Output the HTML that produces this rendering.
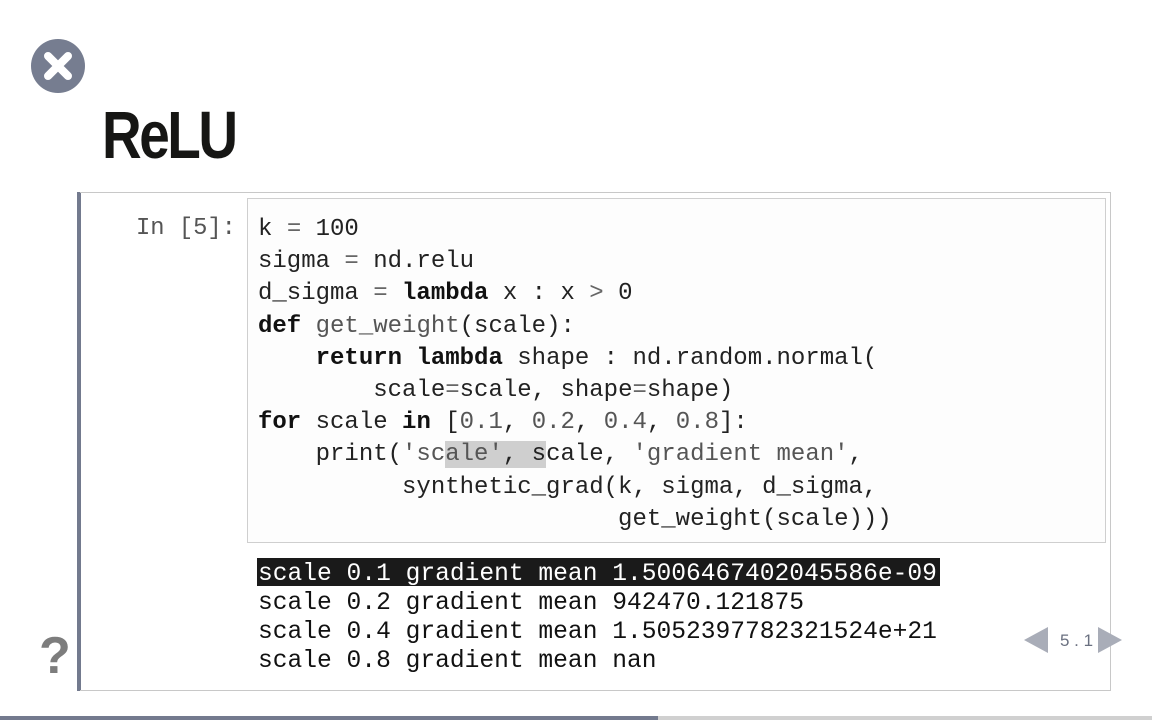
<!DOCTYPE html>
<html><head><meta charset="utf-8"><style>
body{margin:0;width:1152px;height:720px;background:#fff;position:relative;overflow:hidden;font-family:"Liberation Sans",sans-serif}
.abs{position:absolute}
pre{margin:0;font-family:"Liberation Mono",monospace}
.code{left:258px;top:214px;font-size:24px;line-height:32.2px;color:#222}
.code b{font-weight:bold;color:#111}
.s{color:#555}
.op{color:#666}
.out{left:258px;top:560px;font-size:24.6px;line-height:29px;color:#111}
</style></head><body>
<svg class="abs" style="left:30px;top:38px" width="56" height="56" viewBox="0 0 56 56">
<circle cx="28" cy="28" r="27" fill="#767d90"/>
<path d="M18 18 L38 38 M38 18 L18 38" stroke="#fff" stroke-width="8" stroke-linecap="round"/>
</svg>
<div class="abs" style="left:102px;top:97px;font-size:67px;font-weight:bold;color:#161614;letter-spacing:-3px;transform:scaleX(0.82);transform-origin:left top">ReLU</div>
<div class="abs" style="left:77px;top:192px;width:4px;height:499px;background:#737a8e"></div>
<div class="abs" style="left:80px;top:192px;width:1030px;height:497px;border:1px solid #c8c8c8;border-left:none"></div>
<div class="abs" style="left:247px;top:198px;width:857px;height:343px;border:1px solid #cfcfcf;background:#fdfdfd"></div>
<pre class="abs" style="left:136px;top:213px;font-size:23.8px;line-height:32px;color:#555">In [5]:</pre>
<pre class="abs code">k <span class="op">=</span> 100
sigma <span class="op">=</span> nd.relu
d_sigma <span class="op">=</span> <b>lambda</b> x : x <span class="op">&gt;</span> 0
<b>def</b> <span class="s">get_weight</span>(scale):
    <b>return</b> <b>lambda</b> shape : nd.random.normal(
        scale<span class="op">=</span>scale, shape<span class="op">=</span>shape)
<b>for</b> scale <b>in</b> [<span class="s">0.1</span>, <span class="s">0.2</span>, <span class="s">0.4</span>, <span class="s">0.8</span>]:
    print(<span class="s">'sc<span style="background:#cfcfcf">ale'</span></span><span style="background:#cfcfcf">, s</span>cale, <span class="s">'gradient mean'</span>,
          synthetic_grad(k, sigma, d_sigma,
                         get_weight(scale)))</pre>
<div class="abs" style="left:257px;top:558px;width:683px;height:28px;background:#1a1a1a"></div>
<pre class="abs out"><span style="color:#fff">scale 0.1 gradient mean 1.5006467402045586e-09</span>
scale 0.2 gradient mean 942470.121875
scale 0.4 gradient mean 1.5052397782321524e+21
scale 0.8 gradient mean nan</pre>
<div class="abs" style="left:39px;top:626px;font-size:52px;font-weight:bold;color:#7d7d7d">?</div>
<svg class="abs" style="left:1022px;top:625px" width="104" height="30" viewBox="0 0 104 30">
<polygon points="2,15 26,2 26,28" fill="#a9adb8"/>
<polygon points="76,2 100,15 76,28" fill="#a9adb8"/>
<text x="38" y="21" font-family="Liberation Sans" font-size="17" fill="#6a7080">5 . 1</text>
</svg>
<div class="abs" style="left:0;top:716px;width:1152px;height:4px;background:#d0d0d0"></div>
<div class="abs" style="left:0;top:716px;width:658px;height:4px;background:#737a8e"></div>
</body></html>
